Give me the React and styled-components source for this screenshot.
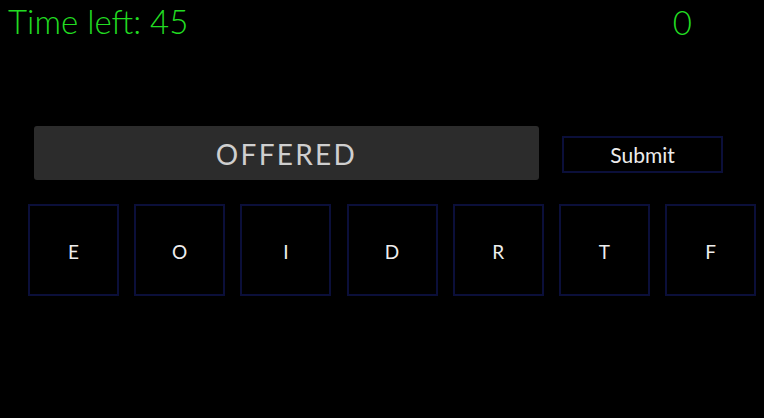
import React from "react";
import styled, { createGlobalStyle } from "styled-components";

const Global = createGlobalStyle`
  html, body { margin: 0; padding: 0; background: #000; }
  body { font-family: "Lato", "Noto Sans", sans-serif; }
`;

const Page = styled.div`
  width: 764px;
  height: 418px;
  background: #000;
  display: flex;
  flex-direction: column;
`;

const Header = styled.div`
  display: flex;
  justify-content: space-between;
  align-items: flex-start;
  height: 44px;
  padding: 0 72px 0 8px;
  color: #22dc22;
  font-size: 33px;
  line-height: 44px;
  font-weight: 300;
`;

const Timer = styled.div`
  margin-top: -1px;
`;

const Score = styled.div``;

const EntryRow = styled.div`
  display: flex;
  align-items: center;
  margin-top: 82px;
  padding-left: 34px;
  gap: 23px;
`;

const WordBox = styled.div`
  width: 505px;
  height: 54px;
  background: #2c2c2c;
  border-radius: 3px;
  display: flex;
  align-items: center;
  justify-content: center;
  color: #cfcfcf;
  font-size: 28px;
  letter-spacing: 2.3px;
  padding-top: 2px;
  box-sizing: border-box;
`;

const SubmitButton = styled.button`
  width: 161px;
  height: 37px;
  margin-top: 3px;
  background: #000;
  border: 2px solid #0b0f3a;
  color: #ececec;
  font-family: inherit;
  font-size: 21px;
  font-weight: 400;
  padding: 0;
`;

const Tiles = styled.div`
  display: flex;
  gap: 15.2px;
  margin-top: 24px;
  padding-left: 28px;
`;

const Tile = styled.div`
  width: 91px;
  height: 92px;
  box-sizing: border-box;
  border: 2px solid #0b0f3a;
  display: flex;
  align-items: center;
  justify-content: center;
  padding-top: 3px;
  color: #eeeeee;
  font-size: 19px;
`;

const letters = ["E", "O", "I", "D", "R", "T", "F"];

export default function App() {
  return (
    <>
      <Global />
      <Page>
        <Header>
          <Timer>Time left: 45</Timer>
          <Score>0</Score>
        </Header>
        <EntryRow>
          <WordBox>OFFERED</WordBox>
          <SubmitButton>Submit</SubmitButton>
        </EntryRow>
        <Tiles>
          {letters.map((l, i) => (
            <Tile key={i}>{l}</Tile>
          ))}
        </Tiles>
      </Page>
    </>
  );
}
